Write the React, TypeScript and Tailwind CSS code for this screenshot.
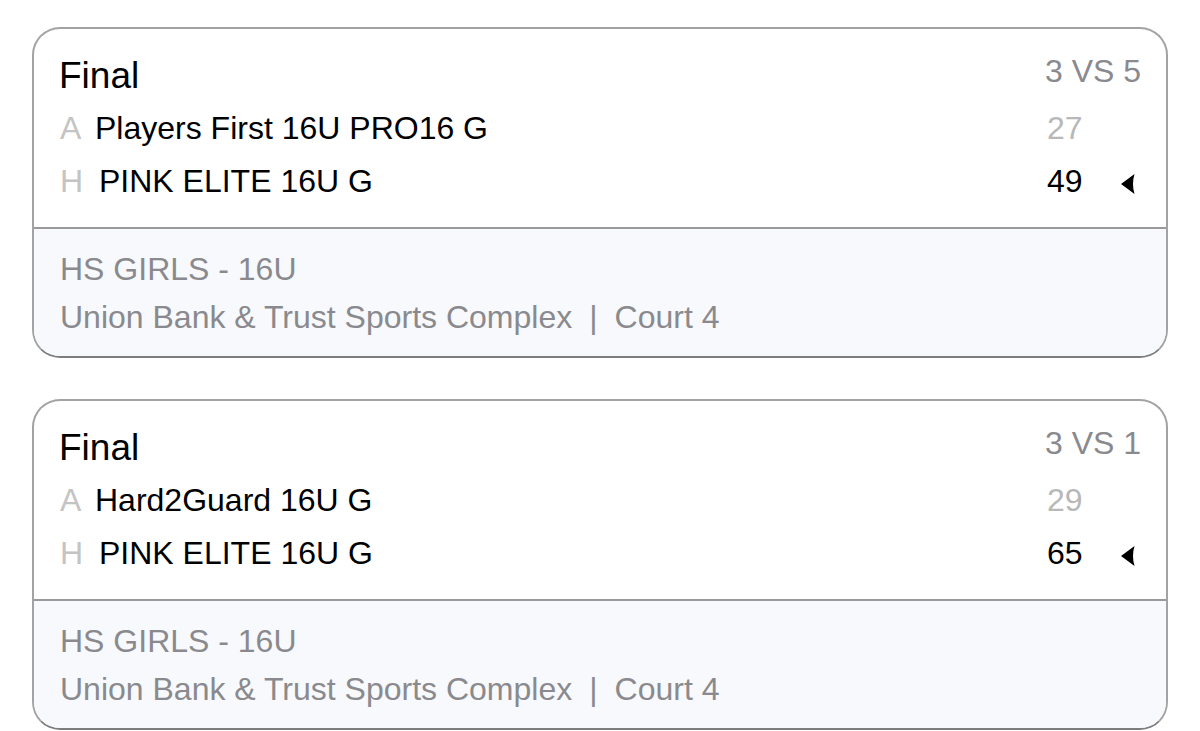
import React from 'react';

type Team = {
  side: string;
  name: string;
  score: number;
  winner?: boolean;
  indent?: boolean;
};

type Game = {
  status: string;
  seeds: string;
  teams: Team[];
  division: string;
  venue: string;
  court: string;
};

const games: Game[] = [
  {
    status: 'Final',
    seeds: '3 VS 5',
    teams: [
      { side: 'A', name: 'Players First 16U PRO16 G', score: 27 },
      { side: 'H', name: 'PINK ELITE 16U G', score: 49, winner: true, indent: true },
    ],
    division: 'HS GIRLS - 16U',
    venue: 'Union Bank & Trust Sports Complex',
    court: 'Court 4',
  },
  {
    status: 'Final',
    seeds: '3 VS 1',
    teams: [
      { side: 'A', name: 'Hard2Guard 16U G', score: 29 },
      { side: 'H', name: 'PINK ELITE 16U G', score: 65, winner: true, indent: true },
    ],
    division: 'HS GIRLS - 16U',
    venue: 'Union Bank & Trust Sports Complex',
    court: 'Court 4',
  },
];

const WinnerArrow: React.FC = () => (
  <svg width="14" height="20" viewBox="0 0 14 20" className="mt-[5px]">
    <path d="M13.5 0 L0 10 L13.5 20 Q10.5 10 13.5 0 Z" fill="#000" />
  </svg>
);

const GameCard: React.FC<{ game: Game }> = ({ game }) => {
  return (
    <div className="mx-[32px] rounded-[28px] border-2 border-[#a3a3a3] border-b-[#7d7d7d] overflow-hidden bg-white">
      <div className="pt-5 pb-[19px] pl-[25px] pr-[25px]">
        <div className="flex items-start justify-between">
          <div className="text-[37px] leading-[53px] text-black">{game.status}</div>
          <div className="text-[32px] leading-[44px] text-[#8a8a8e]">{game.seeds}</div>
        </div>
        {game.teams.map((team) => (
          <div key={team.side} className="flex items-center text-[32px] leading-[53px]">
            <span className="w-[36px] pl-[1px] text-[#c4c4c4]">{team.side}</span>
            <span className={`flex-1 text-black ${team.indent ? 'pl-[4px]' : ''}`}>{team.name}</span>
            <span className={`w-[74px] ${team.winner ? 'text-black' : 'text-[#b8b8b8]'}`}>
              {team.score}
            </span>
            <span className="w-[20px] flex">{team.winner && <WinnerArrow />}</span>
          </div>
        ))}
      </div>
      <div className="border-t-2 border-[#9a9a9a] bg-[#f8f9fd] pt-[16px] pb-[15px] pl-[26px] text-[32px] leading-[48px] text-[#8a8a8e]">
        <div>{game.division}</div>
        <div className="flex">
          <span>{game.venue}</span>
          <span className="mx-[17px]">|</span>
          <span>{game.court}</span>
        </div>
      </div>
    </div>
  );
};

const App: React.FC = () => {
  return (
    <div
      className="min-h-screen bg-white pt-[27px] flex flex-col gap-[41px]"
      style={{ fontFamily: '"Liberation Sans", Arial, sans-serif' }}
    >
      {games.map((g, i) => (
        <GameCard key={i} game={g} />
      ))}
    </div>
  );
};

export default App;
